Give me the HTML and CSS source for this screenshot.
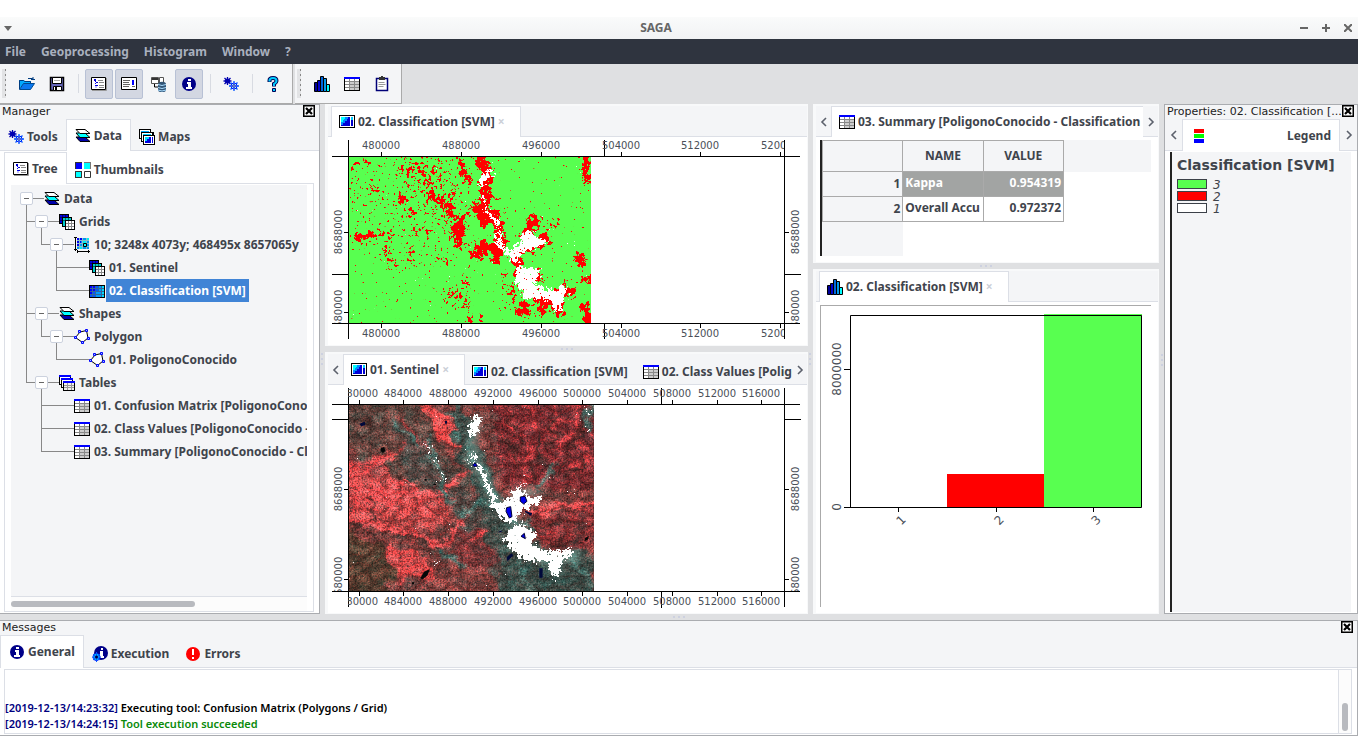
FILE: index.html
```html
<!DOCTYPE html>
<html lang="en">
<head>
<meta charset="utf-8">
<title>SAGA</title>
<link rel="stylesheet" href="styles.css">
</head>
<body>
<svg class="defs" aria-hidden="true">
  <defs>
    <symbol id="i-map" viewBox="0 0 16 16"><rect y="1" width="16" height="13" fill="#000"/><rect x="1" y="2" width="14" height="11" fill="#fff"/><rect x="2" y="3" width="9" height="9" fill="#0000d8"/><path d="M2 3h7v2h-1v2H6v2H4v2H2z" fill="#08f"/><path d="M2 3h4v2H5v1H4v2H2z" fill="#0ff"/><rect x="12" y="3" width="2" height="5" fill="#0cf"/><rect x="12" y="6" width="2" height="6" fill="#00c"/></symbol>
    <symbol id="i-maps" viewBox="0 0 16 16"><path d="M0 0h12v10H0z" fill="#000"/><path d="M1 1h10v8H1z" fill="#fff"/><path d="M2 2h8v6H2z" fill="#0af"/><path d="M2 3h13v10H2z" fill="#000"/><path d="M3 4h10v8H3z" fill="#fff"/><path d="M4 5h8v6H4z" fill="#0cf"/><path d="M4 6h12v10H4z" fill="#000"/><path d="M5 7h10v8H5z" fill="#fff"/><path d="M6 8h6v6H6z" fill="#00d"/><path d="M6 8h4v2H8v2H6z" fill="#0df"/><path d="M13 8h1v6h-1z" fill="#00d"/></symbol>
    <symbol id="i-table" viewBox="0 0 16 16"><rect y="1" width="16" height="14" fill="#000"/><rect x="1" y="3" width="14" height="11" fill="#fff"/><rect x="6" y="6" width="9" height="8" fill="#ccc"/><rect y="1" width="16" height="2" fill="#00f"/><path d="M1 5.500h14M1 8.500h14M1 11.500h14M5.500 3v11M10.500 3v11" stroke="#888" fill="none"/></symbol>
    <symbol id="i-tables" viewBox="0 0 16 16"><path d="M0 0h12v10H0z" fill="#000"/><path d="M1 2h10v7H1z" fill="#fff"/><path d="M0 0h12v2H0z" fill="#00f"/><path d="M2 3h12v10H2z" fill="#000"/><path d="M3 5h10v7H3z" fill="#fff"/><path d="M2 3h12v2H2z" fill="#00f"/><path d="M4 6h12v10H4z" fill="#000"/><path d="M5 8h10v7H5z" fill="#eee"/><path d="M4 6h12v2H4z" fill="#00f"/><path d="M5 10.500h10M5 12.500h10M8.500 8v7M12.500 8v7" stroke="#999"/></symbol>
    <symbol id="i-layers" viewBox="0 0 16 16"><path d="M1 9h9l5 4.500H5z" fill="#00a" stroke="#000"/><path d="M1 5h9l5 4.500H5z" fill="#0ff" stroke="#000"/><path d="M1 1.500h9l5 4H5z" fill="#fff" stroke="#000"/></symbol>
    <symbol id="i-grids" viewBox="0 0 16 16"><path d="M0 0h10v10H0z" fill="#000"/><path d="M1 1h8v8H1z" fill="#00d"/><path d="M3.500 1v8M6.500 1v8M1 3.500h8M1 6.500h8" stroke="#007"/><path d="M3 3h10v10H3z" fill="#000"/><path d="M4 4h8v8H4z" fill="#0cc"/><path d="M6.500 4v8M9.500 4v8M4 6.500h8" stroke="#066"/><path d="M6 6h10v10H6z" fill="#000"/><path d="M7 7h8v8H7z" fill="#fff"/><path d="M9.500 7v8M12.500 7v8M7 9.500h8M7 12.500h8" stroke="#888"/></symbol>
    <symbol id="i-grid" viewBox="0 0 16 16"><path d="M0 2h16v13H0z" fill="#000"/><path d="M1 3h14v11H1z" fill="#369"/><path d="M1 3h2v2H1zM4 3h2v2H4zM1 6h2v2H1zM4 6h2v2H4zM1 9h2v2H1z" fill="#00f"/><path d="M7 3h2v2H7zM4 9h2v2H4zM1 12h2v2H1zM4 12h2v2H4zM7 6h2v2H7z" fill="#05f"/><path d="M10 3h2v2h-2zM10 6h2v2h-2zM7 9h5v2H7zM7 12h5v2H7z" fill="#09f"/><path d="M13 3h2v2h-2zM13 6h2v2h-2zM13 9h2v2h-2zM13 12h2v2h-2z" fill="#0df"/></symbol>
    <symbol id="i-system" viewBox="0 0 16 16"><path d="M3 1h12v11H3z" fill="#09e"/><path d="M3 1h6v2H7v3H5v3H3z" fill="#00e"/><path d="M9 4h3v3H9zM12 1h3v3h-3zM5 9h3v3H5z" fill="#0ee"/><path d="M5.500 1v11M8.500 1v11M12.500 1v11M3 3.500h12M3 6.500h12M3 9.500h12" stroke="#8bc"/><path d="M9.500 6.500h3v3h-3z" fill="#0ff" stroke="#000"/><path d="M1.500 0v14M0 .5h3M0 12.500h3M3 14.500h13M3.500 13v3M14.500 13v3" stroke="#000"/></symbol>
    <symbol id="i-poly" viewBox="0 0 16 16"><path d="M1.500 8.500L6 3l6.500-1.500 1.500 7.500-5.500 4.500z" fill="#fff" stroke="#000"/><path d="M.5 7.500h2v2h-2zM4.500 1.500h2v2h-2zM11.500.5h2v2h-2zM13.500 8.500h2v2h-2zM7.500 12.500h2v2h-2z" fill="#9cf" stroke="#00f"/></symbol>
    <symbol id="i-gear" viewBox="0 0 16 16"><g fill="none"><circle cx="4.500" cy="5" r="2.500" fill="#0000b0"/><path d="M4.500 1v8M.5 5h8M1.500 2l6 6M7.500 2l-6 6" stroke="#0000b0" stroke-width="1.300"/><circle cx="11" cy="10" r="3" fill="#9ff" stroke="#00f"/><path d="M11 5v2M11 13v2M6 10h2M14 10h2M7.500 6.500l1.500 1.500M13 12l1.500 1.500M14.500 6.500l-1.500 1.500M9 12l-1.500 1.500" stroke="#05f" stroke-width="1.300"/><circle cx="11" cy="10" r="1.300" fill="#fff" stroke="#00a"/></g></symbol>
    <symbol id="i-tree" viewBox="0 0 16 16"><path d="M.5 1.500h14v12H.5z" fill="#fff" stroke="#000"/><path d="M1 14.500h14.500V2" fill="none" stroke="#999"/><path d="M3 3h2v2H3zM5 6h2v1H5zM5 9h2v1H5z" fill="#00c"/><path d="M4.500 5v6H6" stroke="#00f" fill="none" stroke-dasharray="1 1"/><path d="M7 4.500h5M8 6.500h5M8 9.500h5M8 11.500h5" stroke="#888"/></symbol>
    <symbol id="i-props" viewBox="0 0 16 16"><path d="M.5 1.500h15v12H.5z" fill="#fff" stroke="#000"/><path d="M2 4.500h7M2 6.500h6M2 8.500h7M2 10.500h6M11 10.500h3" stroke="#666"/><path d="M11 4h2v5h-2z" fill="#00f"/></symbol>
    <symbol id="i-thumb" viewBox="0 0 16 16"><path d="M0 0h7v7H0z" fill="#333"/><path d="M1 1h6v6H1z" fill="#00f"/><path d="M9 0h7v7H9z" fill="#777"/><path d="M9 1h6v6H9z" fill="#0ff"/><path d="M0 9h7v7H0z" fill="#333"/><path d="M1 10h5v5H1z" fill="#0ff"/><path d="M9.500 9.500h6v6h-6z" fill="#fff" stroke="#333"/></symbol>
    <symbol id="i-info" viewBox="0 0 16 16"><circle cx="8" cy="8" r="7" fill="#000088"/><path d="M7 3h3v2H7zM6 6h4v5h1v2H5v-2h2V8H6z" fill="#fff"/></symbol>
    <symbol id="i-exec" viewBox="0 0 16 16"><circle cx="9" cy="7" r="7" fill="#000088"/><path d="M9 2h2v2H9zM8 5h3v5h1v2H8V9z" fill="#fff"/><circle cx="4.500" cy="11" r="3.500" fill="#0cf" stroke="#00f" stroke-dasharray="2 1"/><path d="M4.500 6v10M0 11h9M1 8l7 6M8 8l-7 6" stroke="#05f"/><circle cx="4.500" cy="11" r="1.500" fill="#004"/></symbol>
    <symbol id="i-error" viewBox="0 0 16 16"><circle cx="8" cy="8" r="7" fill="#f00"/><path d="M7 3h2v6H7zM7 11h2v2H7z" fill="#fff"/></symbol>
    <symbol id="i-open" viewBox="0 0 16 16"><path d="M0 13V4h5l1 1h6v3H5z" fill="#0af"/><path d="M.5 13.500l4-6h11l-4 6z" fill="#0a78f0" stroke="#004a90"/><path d="M.5 13V4.500h4l1 1h6V7M9 2.500h4.500V4M12 3.500h4M14 1v3" fill="none" stroke="#003c80"/></symbol>
    <symbol id="i-save" viewBox="0 0 16 16"><path d="M1.500 1.500h13v13h-13z" fill="#66b" stroke="#000" stroke-width="1.500"/><path d="M3.500 1.500h9v6h-9zM4.500 10.500h8v4h-8z" fill="#fff" stroke="#000"/><path d="M6 11h2v3H6z" fill="#000"/><path d="M5 4.500h6" stroke="#aaa"/></symbol>
    <symbol id="i-data" viewBox="0 0 16 16"><path d="M.5 1.500h7v6h-7zM8.500 1.500h4v6h-4z" fill="#fff" stroke="#555"/><path d="M1 2h6v2H1zM9 6h4v2H9z" fill="#333"/><path d="M3.500 8v3H7" fill="none" stroke="#000"/><path d="M7 8c0-3 8-3 8 0v6c0 3-8 3-8 0z" fill="#357"/><path d="M7 8.500q4 2 8 0M7 11.500q4 2 8 0M7 14q4 2 8 0" fill="none" stroke="#adf"/></symbol>
    <symbol id="i-help" viewBox="0 0 16 16"><path d="M4.500 6V4.500Q4.500 2 8 2t3.500 3Q11.500 6.500 9 8v2.500" fill="none" stroke="#005" stroke-width="4"/><path d="M4.500 5.500V4.500Q4.500 2 8 2t3.500 3Q11.500 6.500 9 8v2" fill="none" stroke="#0cf" stroke-width="2"/><path d="M7.500 12.500h3v3h-3z" fill="#0cf" stroke="#005"/></symbol>
    <symbol id="i-histo" viewBox="0 0 16 16"><path d="M.5 6.500h3v9h-3z" fill="#009" stroke="#000"/><path d="M3.500 4.500h3v11h-3z" fill="#00c" stroke="#000"/><path d="M6.500.5h3v15h-3z" fill="#06d" stroke="#000"/><path d="M9.500 2.500h3v13h-3z" fill="#09e" stroke="#000"/><path d="M12.500 8.500h3v7h-3z" fill="#0ff" stroke="#000"/></symbol>
    <symbol id="i-clip" viewBox="0 0 16 16"><path d="M2.500 2.500h11v12h-11z" fill="#fff" stroke="#007" stroke-width="1.500"/><path d="M5 1h6v3H5zM7 0h2v2H7z" fill="#333"/><path d="M4.500 6.500h6M4.500 8.500h7M4.500 10.500h5" stroke="#999"/></symbol>
    <symbol id="i-legend" viewBox="0 0 16 16"><path d="M3 1h10v4H3z" fill="#f00"/><path d="M3 6h10v4H3z" fill="#0f0"/><path d="M3 11h10v4H3z" fill="#00f"/></symbol>
    <symbol id="i-close" viewBox="0 0 12 12"><rect x=".75" y=".75" width="10.500" height="10.500" fill="#fff" stroke="#000" stroke-width="1.500"/><path d="M3 3l6 6M9 3L3 9" stroke="#000" stroke-width="2.200"/></symbol>
    <symbol id="i-prev" viewBox="0 0 8 12"><path d="M6 2L2 6l4 4" fill="none" stroke="#5c616c" stroke-width="1.600"/></symbol>
    <symbol id="i-next" viewBox="0 0 8 12"><path d="M2 2l4 4-4 4" fill="none" stroke="#5c616c" stroke-width="1.600"/></symbol>

    <!-- Turns painted density into solid pixels of one colour with grainy edges -->
    <filter id="f-red" x="0" y="0" width="780" height="540" filterUnits="userSpaceOnUse" color-interpolation-filters="sRGB">
      <feGaussianBlur in="SourceGraphic" stdDeviation="4" result="s"/>
      <feTurbulence type="fractalNoise" baseFrequency=".05" numOctaves="4" seed="5" result="w"/>
      <feDisplacementMap in="s" in2="w" scale="40" xChannelSelector="R" yChannelSelector="G" result="d"/>
      <feTurbulence type="fractalNoise" baseFrequency=".12" numOctaves="3" seed="8" result="n"/>
      <feComposite in="d" in2="n" operator="arithmetic" k2=".6" k3="1" k4="0"/>
      <feColorMatrix values="0 0 0 0 1  0 0 0 0 0  0 0 0 0 0  0 0 0 40 -31"/>
    </filter>
    <filter id="f-white" x="0" y="0" width="780" height="600" filterUnits="userSpaceOnUse" color-interpolation-filters="sRGB">
      <feGaussianBlur in="SourceGraphic" stdDeviation="5" result="s"/>
      <feTurbulence type="fractalNoise" baseFrequency=".07" numOctaves="4" seed="2" result="w"/>
      <feDisplacementMap in="s" in2="w" scale="34" xChannelSelector="R" yChannelSelector="G" result="d"/>
      <feTurbulence type="fractalNoise" baseFrequency=".16" numOctaves="3" seed="11" result="n"/>
      <feComposite in="d" in2="n" operator="arithmetic" k2=".6" k3="1" k4="0"/>
      <feColorMatrix values="0 0 0 0 1  0 0 0 0 1  0 0 0 0 1  0 0 0 30 -25"/>
    </filter>
    <filter id="f-land" x="-80" y="-80" width="940" height="760" filterUnits="userSpaceOnUse" color-interpolation-filters="sRGB">
      <feTurbulence type="fractalNoise" baseFrequency=".02" numOctaves="5" seed="3" result="w"/>
      <feGaussianBlur in="SourceGraphic" stdDeviation="4" result="b"/>
      <feDisplacementMap in="b" in2="w" scale="70" xChannelSelector="R" yChannelSelector="G" result="d"/>
      <feTurbulence type="turbulence" baseFrequency=".022 .03" numOctaves="5" seed="9"/>
      <feColorMatrix values=".8 0 0 0 .48  .6 .4 0 0 .42  .6 .4 0 0 .42  0 0 0 0 1" result="g"/>
      <feComposite in="d" in2="g" operator="arithmetic" k1="1.500" k2="0" k3="0" k4="-.03" result="m"/>
      <feTurbulence type="fractalNoise" baseFrequency=".2" numOctaves="2" seed="14"/>
      <feColorMatrix values="1 0 0 0 0  .6 .4 0 0 0  .6 .4 0 0 0  0 0 0 0 1" result="f"/>
      <feComposite in="m" in2="f" operator="arithmetic" k1="1.500" k2=".2" k3="0" k4="0"/>
      <feColorMatrix values="1 0 0 0 0  0 1 0 0 0  0 0 1 0 0  0 0 0 0 1"/>
    </filter>
    <filter id="f-halo" x="0" y="0" width="780" height="600" filterUnits="userSpaceOnUse"><feGaussianBlur stdDeviation="9"/></filter>
  </defs>
</svg>

<div class="window">
  <header class="titlebar">
    <button class="tb-menu" aria-label="Window menu"><svg width="8" height="5"><path d="M0 0h8L4 5z" fill="#666"/></svg></button>
    <h1>SAGA</h1>
    <div class="win-controls">
      <button aria-label="Minimize"><svg width="8" height="8"><path d="M0 4h8" stroke="#666" stroke-width="2"/></svg></button>
      <button aria-label="Maximize"><svg width="8" height="8"><path d="M0 4h8M4 0v8" stroke="#666" stroke-width="2"/></svg></button>
      <button aria-label="Close"><svg width="8" height="8"><path d="M0 0l8 8M8 0L0 8" stroke="#666" stroke-width="2"/></svg></button>
    </div>
  </header>
  <nav class="menubar">
    <button>File</button><button>Geoprocessing</button><button>Histogram</button><button>Window</button><button>?</button>
  </nav>
  <div class="toolbars">
    <div class="toolbar" role="toolbar">
      <span class="grip"></span>
      <button aria-label="Open"><svg class="icon"><use href="#i-open"/></svg></button>
      <button aria-label="Save"><svg class="icon"><use href="#i-save"/></svg></button>
      <span class="sep"></span>
      <button class="on" aria-label="Manager"><svg class="icon"><use href="#i-tree"/></svg></button>
      <button class="on" aria-label="Properties"><svg class="icon"><use href="#i-props"/></svg></button>
      <button aria-label="Data source"><svg class="icon"><use href="#i-data"/></svg></button>
      <button class="on" aria-label="Messages"><svg class="icon"><use href="#i-info"/></svg></button>
      <span class="sep"></span>
      <button aria-label="Run tool"><svg class="icon"><use href="#i-gear"/></svg></button>
      <span class="sep"></span>
      <button aria-label="Help"><svg class="icon"><use href="#i-help"/></svg></button>
    </div>
    <div class="toolbar" role="toolbar">
      <span class="grip"></span>
      <button aria-label="Histogram"><svg class="icon"><use href="#i-histo"/></svg></button>
      <button aria-label="Table"><svg class="icon"><use href="#i-table"/></svg></button>
      <button aria-label="Clipboard"><svg class="icon"><use href="#i-clip"/></svg></button>
    </div>
  </div>

  <main class="workspace">
    <aside class="dock">
      <div class="dock-head"><h2>Manager</h2><button aria-label="Close manager"><svg class="x"><use href="#i-close"/></svg></button></div>
      <div class="tabs">
        <button class="tab"><svg class="icon"><use href="#i-gear"/></svg>Tools</button>
        <button class="tab active"><svg class="icon"><use href="#i-layers"/></svg>Data</button>
        <button class="tab"><svg class="icon"><use href="#i-maps"/></svg>Maps</button>
      </div>
      <div class="sub">
        <div class="tabs plain">
          <button class="tab active"><svg class="icon"><use href="#i-tree"/></svg>Tree</button>
          <button class="tab"><svg class="icon"><use href="#i-thumb"/></svg>Thumbnails</button>
        </div>
        <div class="tree-box">
          <div class="tree" role="tree">
            <div class="row" role="treeitem"><button class="cell open root" aria-label="Collapse"></button><i class="arm"></i><svg class="icon"><use href="#i-layers"/></svg><span>Data</span></div>
            <div class="row" role="treeitem"><i class="cell tee"></i><button class="cell open" aria-label="Collapse"></button><i class="arm"></i><svg class="icon"><use href="#i-grids"/></svg><span>Grids</span></div>
            <div class="row" role="treeitem"><i class="cell pass"></i><i class="cell end"></i><button class="cell open" aria-label="Collapse"></button><i class="arm"></i><svg class="icon"><use href="#i-system"/></svg><span>10; 3248x 4073y; 468495x 8657065y</span></div>
            <div class="row" role="treeitem"><i class="cell pass"></i><i class="cell"></i><i class="cell tee"></i><i class="cell leaf"></i><i class="arm"></i><svg class="icon"><use href="#i-grids"/></svg><span>01. Sentinel</span></div>
            <div class="row selected" role="treeitem" aria-selected="true"><i class="cell pass"></i><i class="cell"></i><i class="cell end"></i><i class="cell leaf"></i><i class="arm"></i><svg class="icon"><use href="#i-grid"/></svg><span>02. Classification [SVM]</span></div>
            <div class="row" role="treeitem"><i class="cell tee"></i><button class="cell open" aria-label="Collapse"></button><i class="arm"></i><svg class="icon"><use href="#i-layers"/></svg><span>Shapes</span></div>
            <div class="row" role="treeitem"><i class="cell pass"></i><i class="cell end"></i><button class="cell open" aria-label="Collapse"></button><i class="arm"></i><svg class="icon"><use href="#i-poly"/></svg><span>Polygon</span></div>
            <div class="row" role="treeitem"><i class="cell pass"></i><i class="cell"></i><i class="cell end"></i><i class="cell leaf"></i><i class="arm"></i><svg class="icon"><use href="#i-poly"/></svg><span>01. PoligonoConocido</span></div>
            <div class="row" role="treeitem"><i class="cell end"></i><button class="cell open" aria-label="Collapse"></button><i class="arm"></i><svg class="icon"><use href="#i-tables"/></svg><span>Tables</span></div>
            <div class="row" role="treeitem"><i class="cell"></i><i class="cell tee"></i><i class="cell leaf"></i><i class="arm"></i><svg class="icon"><use href="#i-table"/></svg><span>01. Confusion Matrix [PoligonoConocido</span></div>
            <div class="row" role="treeitem"><i class="cell"></i><i class="cell tee"></i><i class="cell leaf"></i><i class="arm"></i><svg class="icon"><use href="#i-table"/></svg><span>02. Class Values [PoligonoConocido - Cl</span></div>
            <div class="row" role="treeitem"><i class="cell"></i><i class="cell end"></i><i class="cell leaf"></i><i class="arm"></i><svg class="icon"><use href="#i-table"/></svg><span>03. Summary [PoligonoConocido - Classification</span></div>
          </div>
          <div class="hscroll"><span></span></div>
        </div>
      </div>
    </aside>

    <div class="column maps">
      <section class="pane">
        <div class="tabs inset"><button class="tab active"><svg class="icon"><use href="#i-map"/></svg>02. Classification [SVM]<span class="close">×</span></button></div>
        <div class="content">
          <svg class="plot" role="img" aria-label="Classification map">
            <svg x="20" y="20" width="243" height="166">
              <rect width="243" height="166" fill="#58ff50"/>
              <g transform="translate(-8 -6) scale(.3333)">
                <g filter="url(#f-red)" fill="none" stroke="#000" stroke-linejoin="round" stroke-linecap="round">
                  <rect x="0" y="0" width="780" height="540" fill="#000" fill-opacity=".01" stroke="none"/>
                  <path d="M27 0H380L400 200 380 300 300 340 160 370 0 270V0z" fill="#000" fill-opacity=".11" stroke="none"/>
                  <path d="M170 20L300 20 360 190 330 250 270 210 190 100zM310 380h80v90H310z" fill="#000" fill-opacity=".17" stroke="none"/>
                  <path d="M580 190l70 0-30 80-60 0zM470 270l60 80-40 110 60 50 80-20" fill="#000" fill-opacity=".2" stroke="none"/>
                  <g stroke-opacity=".5" stroke-width="12"><path d="M30 50L75 35M170 55l60-5 30 30 20 55 40 30 20 30M280 60l25 20M335 90v60l-15 25 20 25 20 30M50 262l40-5 30-15 50 15M85 115l30-3M215 240l60 0M225 175l-30 30M300 320l30 20M150 330l25 5M375 380l8 30M310 440l40-15 20 20 10 25M140 270l0 60M210 290l0 40M620 240l45-35M450 130l25 10M490 370l10 60M520 395l0 45"/></g>
                  <g stroke-opacity=".85" stroke-width="14"><path d="M350 15l20 40 18 40M270 130l25 15 25 15 10 30M370 190l-10 40 5 50M60 258h40M345 235l20-15M710 315l15 20M425 500v15M380 508h12M540 485l20 0"/></g>
                  <path stroke-width="26" d="M420 14l12 40 15 0-15 55M430 130l5 40-15 30M408 170l30 45 30-30M440 200l30 15 15 60-15 50M585 200l-10 25-20 30M620 262l-30 20-50 20M480 290l-65 0-5 25M525 320l20 60 30 50 60 20 40-30 25 0M545 460l15 25M645 430l10 50"/>
                  <path stroke-width="20" d="M735 15l8 75M740 485l8 38M675 410l20 20M735 460l10 30M360 225l0 55M720 320l8 25M735 385l25 0M610 460v20M185 135v10M600 370l-15 10M350 235v20"/>
                </g>
                <g filter="url(#f-white)" fill="#fff" stroke="#fff" stroke-width="11" stroke-linejoin="round">
                  <path d="M440 55l12 5-20 35-15 10zM430 138l4 12M432 165l10 20 15 12 22 35M478 240l4 45 25 20 30-20 20-40 20-5 5 25 35 5-40 20-30 5-20 35-15-10-10-20-30-20z"/>
                  <path d="M535 345l60 15-5 25-25 10 40 25 50 0 20-8 0 15-15 25-5 25-10-5 0-25-65-10-20 5-30-50z"/>
                </g>
              </g>
            </svg>
            <g class="axes"><path d="M20.500 3v199M456.500 3v199M276.500 3v16M276.500 186v16M4 19.500h468M4 186.500h468M4 137.500h16M457 137.500h16M53.500 15v4M133.500 15v4M213.500 15v4M293.500 15v4M372.500 15v4M452.500 15v4M53.500 187v4M133.500 187v4M213.500 187v4M293.500 187v4M372.500 187v4M452.500 187v4M16 95.500h4M457 95.500h4M16 175.500h4M457 175.500h4"/></g>
            <svg x="21" y="0" width="435" height="20" class="ticks"><g><text x="32" y="12">480000</text><text x="112" y="12">488000</text><text x="192" y="12">496000</text><text x="272" y="12">504000</text><text x="351" y="12">512000</text><text x="431" y="12">520000</text></g></svg>
            <svg x="21" y="188" width="435" height="20" class="ticks"><g><text x="32" y="12">480000</text><text x="112" y="12">488000</text><text x="192" y="12">496000</text><text x="272" y="12">504000</text><text x="351" y="12">512000</text><text x="431" y="12">520000</text></g></svg>
            <svg y="20" width="20" height="166" class="ticks"><text transform="translate(14 75) rotate(-90)">8688000</text><text transform="translate(14 155) rotate(-90)">8680000</text></svg>
            <svg x="457" y="20" width="20" height="166" class="ticks"><text transform="translate(14 75) rotate(-90)">8688000</text><text transform="translate(14 155) rotate(-90)">8680000</text></svg>
          </svg>
        </div>
      </section>
      <section class="pane">
        <div class="tabs scrolled">
          <button class="arrow" aria-label="Previous tabs"><svg><use href="#i-prev"/></svg></button>
          <div class="strip">
            <button class="tab active"><svg class="icon"><use href="#i-map"/></svg>01. Sentinel<span class="close">×</span></button>
            <button class="tab"><svg class="icon"><use href="#i-map"/></svg>02. Classification [SVM]</button>
            <button class="tab"><svg class="icon"><use href="#i-table"/></svg>02. Class Values [PoligonoConocido]</button>
          </div>
          <button class="arrow" aria-label="Next tabs"><svg><use href="#i-next"/></svg></button>
        </div>
        <div class="content">
          <svg class="plot" role="img" aria-label="Sentinel image">
            <svg x="20" y="20" width="246" height="186">
              <g transform="translate(-8 -6) scale(.3333)">
                <g filter="url(#f-land)" fill="none" stroke-linecap="round">
                  <rect x="-80" y="-80" width="940" height="760" fill="#7c4542" stroke="none"/>
                  <path d="M-80-80H230L300 130 380 250 400 320 230 340 100 180-80 130z" fill="#664a44"/>
                  <path d="M160 60l60 20 70 80 80 120 110 60 40 110-60 90-70-100-60-120-130-100z" fill="#584a46"/>
                  <path d="M330-80l50 120 60 160 60 130 60 110 180 10 40 60-60 150H500L430 330 370 210 340 110z" fill="#45504b"/>
                  <path d="M450-80h400v300l-190 60-90-20-40 60-50-110z" fill="#7a3336"/>
                  <path d="M560 350l300-35v110l-220 40-80-60z" fill="#803839"/>
                  <path d="M-80 240l190-70 50 50 60 60 130 10-30 80-90 70-100-60-210 10z" fill="#b04a49"/>
                  <path d="M240 15l80 20 30 110-50-10z" fill="#e8504f"/>
                  <path d="M140 430l120 40 20 60-50 20-90-20z" fill="#e05050"/>
                  <path d="M-80 400l170 20 70 80-40 180H-80z" fill="#5a4236"/>
                  <path d="M350 380l90 20 30 100-70 20-60-40z" fill="#7c3f3f"/>
                  <path d="M20 260L180 300 300 270 370 230M30 240L150 180M10 370L200 400 300 440 350 380 390 340M60 340L200 230 260 350M560 350L660 320 820 322M40 290l90 70M100 260l60 70 60 10" stroke="#ff5658" stroke-width="12"/>
                  <path d="M490 60l80 80-20 130M570 20l40 120 70-80M610 240l80-140 60 60M480 160l80 60M500 30l40 50M640 20l30 110M600 430l120-80M200 60l60 80M100 200l80-60M20 210l80-40M700 200l60-30M590 280l-40 50M700 30l60 90M380 440l60-30" stroke="#cf4547" stroke-width="8"/>
                  <path d="M520 50l20 160M600 80l-20 150M680 180l-30 50M740 60l-60 100M30 390l130 10 140 60M90 300l20 60M160 200l40 40M580 370l160 0M610 460l130-70M470 90l50 70M660 60l-30 90M590 150l30 80M740 180l-70 60M30 110l80 40M60 60l60 30" stroke="#43302d" stroke-width="8"/>
                  <path d="M745 25l5 70M330 40l20 60M265 120l20 80 30 60 20 50M380 150l30 50 30 50 50 90 80 50M370 350l70-40M540 500l20 60M640 200l-40 70M700 480l50 60M300 460l60 30M180 90l60 40" stroke="#527069" stroke-width="16"/>
                </g>
                <path filter="url(#f-halo)" d="M410 60l-10 60 0 60 30 50 25 60 50 50 30-60 60 0M520 350l20 80 60 45 70 0 50-10M650 480l0 50" fill="none" stroke="#7fb0a6" stroke-width="28" stroke-opacity=".55"/>
                <g filter="url(#f-white)" fill="#fff" stroke="#fff" stroke-width="14" stroke-linejoin="round">
                  <path d="M405 55l15 5-18 45-12-3zM403 155v25M405 195l20 20 15 35 15 40 0 25 35 30 20 25M455 315l25 5 30-20 30-28 15 25 45 3-25 15-35 15-20 35-20 0z"/>
                  <path d="M525 385l20-5 15 18 25 5-5 17-20 3 35 35 50 5 50-8-40 20 0 30-5 30-15-25-10-30-65 0-35-25-25-35z"/>
                  <path d="M280 493h12"/><path d="M385 175l10 20M260 125l20 50M270 150l20 40M550 235l0 30M745 90l10 10M670 470l30-5M300 215l15 40M740 30l10 20" stroke-width="18" stroke-opacity=".5"/>
                </g>
                <g fill="#0000e8" stroke="#000030" stroke-width="3"><path d="M541 294l14-2 6 15-10 8-10-8zM500 326l12-3 4 30-8 4-10-20zM543 412l10-9 3 16zM398 198l8-6 6 10h-10z"/></g>
                <path d="M500 475l14-12 6 6-18 18zM598 508h10v28h-10zM555 335l22 8-4 8-18-12zM473 400l12-6v6zM58 74l16-6 2 10-12 4zM315 66h6v8h-6z" fill="#00093a"/>
                <path d="M123 146l10-2 3 12-8 6-6-6zM242 536l10-18 18-8-8 20-16 12zM216 550h6v6h-6zM254 240h6v5h-6zM280 254h8v4h-8zM735 417l12-6-4 12-10 4z" fill="#050808"/>
              </g>
            </svg>
            <g class="axes"><path d="M20.500 3v219M456.500 3v219M333.500 3v16M333.500 207v16M4 19.500h468M4 206.500h468M4 34.500h16M457 34.500h16M31.500 15v4M75.500 15v4M120.500 15v4M165.500 15v4M210.500 15v4M254.500 15v4M299.500 15v4M344.500 15v4M389.500 15v4M433.500 15v4M31.500 207v4M75.500 207v4M120.500 207v4M165.500 207v4M210.500 207v4M254.500 207v4M299.500 207v4M344.500 207v4M389.500 207v4M433.500 207v4M16 104.500h4M457 104.500h4M16 194.500h4M457 194.500h4"/></g>
            <svg x="20" y="0" width="435" height="20" class="ticks"><g><text x="11" y="12">480000</text><text x="55" y="12">484000</text><text x="100" y="12">488000</text><text x="145" y="12">492000</text><text x="190" y="12">496000</text><text x="234" y="12">500000</text><text x="279" y="12">504000</text><text x="324" y="12">508000</text><text x="369" y="12">512000</text><text x="413" y="12">516000</text></g></svg>
            <svg x="20" y="208" width="435" height="20" class="ticks"><g><text x="11" y="12">480000</text><text x="55" y="12">484000</text><text x="100" y="12">488000</text><text x="145" y="12">492000</text><text x="190" y="12">496000</text><text x="234" y="12">500000</text><text x="279" y="12">504000</text><text x="324" y="12">508000</text><text x="369" y="12">512000</text><text x="413" y="12">516000</text></g></svg>
            <svg y="20" width="20" height="186" class="ticks"><text transform="translate(14 84) rotate(-90)">8688000</text><text transform="translate(14 174) rotate(-90)">8680000</text></svg>
            <svg x="457" y="20" width="20" height="186" class="ticks"><text transform="translate(14 84) rotate(-90)">8688000</text><text transform="translate(14 174) rotate(-90)">8680000</text></svg>
          </svg>
        </div>
      </section>
    </div>

    <div class="column stats">
      <section class="pane">
        <div class="tabs scrolled">
          <button class="arrow" aria-label="Previous tabs"><svg><use href="#i-prev"/></svg></button>
          <div class="strip"><button class="tab active"><svg class="icon"><use href="#i-table"/></svg>03. Summary [PoligonoConocido - Classification [SVM]]</button></div>
          <button class="arrow" aria-label="Next tabs"><svg><use href="#i-next"/></svg></button>
        </div>
        <div class="content padded">
          <div class="sheet">
            <table>
              <thead><tr><th></th><th>NAME</th><th>VALUE</th></tr></thead>
              <tbody>
                <tr class="picked"><th>1</th><td>Kappa</td><td class="num">0.954319</td></tr>
                <tr><th>2</th><td>Overall Accu</td><td class="num">0.972372</td></tr>
              </tbody>
            </table>
          </div>
        </div>
      </section>
      <section class="pane">
        <div class="tabs inset"><button class="tab active"><svg class="icon"><use href="#i-histo"/></svg>02. Classification [SVM]<span class="close">×</span></button></div>
        <div class="content padded">
          <div class="chart">
            <svg class="plot" role="img" aria-label="Histogram of classes">
              <path d="M126 168h97v33h-97z" fill="#f00"/><path d="M223 8h98v193h-98z" fill="#58ff50"/>
              <path d="M23 201.500h297.500V9.500H29.500V202M23 63.500h6M77.500 202v4M175.500 202v4M272.500 202v4" fill="none" stroke="#000"/>
              <g class="values"><text transform="translate(20 63) rotate(-90)">8000000</text><text transform="translate(20 201) rotate(-90)">0</text>
              <text transform="translate(83 217) rotate(-45)">1</text><text transform="translate(181 217) rotate(-45)">2</text><text transform="translate(278 217) rotate(-45)">3</text></g>
            </svg>
          </div>
        </div>
      </section>
    </div>

    <aside class="dock props">
      <div class="dock-head"><h2>Properties: 02. Classification [...</h2><button aria-label="Close properties"><svg class="x"><use href="#i-close"/></svg></button></div>
      <div class="tabs scrolled">
        <button class="arrow" aria-label="Previous tabs"><svg><use href="#i-prev"/></svg></button>
        <div class="strip"><button class="tab active wide"><svg class="icon"><use href="#i-legend"/></svg>Legend</button></div>
        <button class="arrow" aria-label="Next tabs"><svg><use href="#i-next"/></svg></button>
      </div>
      <div class="legend">
        <h3>Classification [SVM]</h3>
        <ul><li><i class="green"></i>3</li><li><i class="red"></i>2</li><li><i class="white"></i>1</li></ul>
      </div>
    </aside>
  </main>

  <section class="dock messages">
    <div class="dock-head"><h2>Messages</h2><button aria-label="Close messages"><svg class="x"><use href="#i-close"/></svg></button></div>
    <div class="tabs">
      <button class="tab active"><svg class="icon"><use href="#i-info"/></svg>General</button>
      <button class="tab"><svg class="icon"><use href="#i-exec"/></svg>Execution</button>
      <button class="tab"><svg class="icon"><use href="#i-error"/></svg>Errors</button>
    </div>
    <div class="log-wrap"><div class="log">
      <p><time>[2019-12-13/14:23:32]</time> Executing tool: Confusion Matrix (Polygons / Grid)</p>
      <p class="ok"><time>[2019-12-13/14:24:15]</time> Tool execution succeeded</p>
    </div><div class="vscroll"><span></span></div></div>
  </section>
</div>
</body>
</html>
```
FILE: styles.css
```css
* { box-sizing: border-box; }
body {
  margin: 0;
  height: 100vh;
  background: #fff;
  color: #3f444c;
  font: 700 12px/20px "Noto Sans", sans-serif;
  overflow: hidden;
}
button { font: inherit; color: inherit; background: none; border: 0; padding: 0; margin: 0; }
h1, h2, h3, p, ul { margin: 0; padding: 0; font: inherit; }
.defs { position: absolute; width: 0; height: 0; }
.icon { width: 16px; height: 16px; flex: none; }

.window {
  display: flex;
  flex-direction: column;
  height: 100vh;
  padding: 17px 2px 2px 0;
}
.titlebar {
  display: flex;
  align-items: center;
  flex: none;
  height: 22px;
  padding: 0 6px 0 4px;
  background: linear-gradient(#fafbfb, #f1f2f4);
  color: #666;
}
.titlebar button { display: flex; }
.tb-menu { width: 8px; }
.titlebar h1 { flex: 1; text-align: center; font-size: 12px; }
.win-controls { display: flex; gap: 14px; }

.menubar {
  display: flex;
  flex: none;
  gap: 15px;
  height: 25px;
  padding: 0 5px;
  background: #2f343f;
  color: #a9b0be;
}
.toolbars { display: flex; flex: none; gap: 2px; height: 40px; background: #dfe0e2; }
.toolbar {
  display: flex;
  align-items: center;
  gap: 2px;
  padding: 0 5px 0 0;
  background: #f4f5f7;
  border-right: 1px solid #aaa;
  border-bottom: 1px solid #aaa;
}
.toolbar button {
  display: flex;
  align-items: center;
  justify-content: center;
  width: 28px;
  height: 30px;
  border-radius: 2px;
}
.toolbar .on { background: #d3d7e2; border: 1px solid #b8c1d5; }
.grip {
  align-self: stretch;
  width: 8px;
  margin-right: 3px;
  padding: 5px 2px;
  background: linear-gradient(#888, #888 2px, transparent 2px) 3px 0 / 2px 5px repeat-y content-box #e2e3e5;
}
.sep { width: 10px; height: 19px; background: linear-gradient(#d8dbe2, #d8dbe2) 5px 0 / 1px 100% no-repeat; }

.workspace {
  position: relative;
  display: grid;
  flex: 1;
  min-height: 0;
  grid-template-columns: 320px minmax(0, 483fr) minmax(0, 346fr) 194px;
  grid-template-rows: minmax(0, 1fr);
  gap: 5px;
  padding-bottom: 6px;
  background: #dfe0e2;
}
.column { position: relative; display: grid; gap: 6px; min-height: 0; }
.maps { grid-template-rows: minmax(0, 242fr) minmax(0, 262fr); }
.stats { grid-template-rows: minmax(0, 159fr) minmax(0, 345fr); }

/* Three-dot handles on the splitters */
.pane:first-child::after, .workspace::after, .column::before, .props::before {
  content: "";
  position: absolute;
}
.pane:first-child::after, .workspace::after {
  left: 50%;
  width: 12px;
  height: 2px;
  transform: translateX(-50%);
  background: linear-gradient(90deg, #cdd1e0 2px, transparent 2px) 0 0 / 5px 2px;
}
.pane:first-child::after { bottom: -4px; }
.workspace::after { bottom: 2px; }
.column::before, .props::before {
  left: -4px;
  top: 249px;
  width: 2px;
  height: 12px;
  background: linear-gradient(#cdd1e0 2px, transparent 2px) 0 0 / 2px 5px;
}

.dock {
  position: relative;
  display: flex;
  flex-direction: column;
  min-width: 0;
  min-height: 0;
  background: #fff;
  border: solid #aaacb0;
  border-width: 1px 1px 1px 0;
}
.dock-head {
  display: flex;
  flex: none;
  justify-content: space-between;
  height: 14px;
  padding: 0 4px 0 2px;
  background: #f4f5f7;
  color: #222;
  font: 400 11px/13px "DejaVu Sans", sans-serif;
}
.dock-head h2 { white-space: nowrap; }
.dock-head button { display: flex; }
.x { width: 12px; height: 12px; }

.tabs {
  display: flex;
  flex: none;
  align-items: stretch;
  height: 32px;
  background: #f4f5f7;
  box-shadow: inset 0 -1px #dcdfe6;
}
.tabs.plain { background: #fff; }
.tab {
  display: flex;
  align-items: center;
  flex: none;
  gap: 3px;
  padding: 4px 8px 0;
  white-space: nowrap;
}
.tab.active { background: #fff; border: solid #dcdfe6; border-width: 1px 1px 0; padding-top: 0; }
.close { color: #ccd0d8; font-size: 12px; }
.arrow { display: flex; align-items: center; justify-content: center; flex: none; width: 17px; }
.arrow svg { width: 8px; height: 12px; }
.strip { display: flex; flex: 1; min-width: 0; overflow: hidden; }
.tab.wide { flex: 1; justify-content: space-between; }

.sub { display: flex; flex: 1; flex-direction: column; min-height: 0; padding: 1px 5px 1px 4px; }
.tree-box {
  display: flex;
  flex: 1;
  flex-direction: column;
  min-height: 0;
  padding: 1px 6px 0;
  border: 1px solid #dcdfe6;
  border-top: 0;
}
.tree { flex: 1; padding: 2px 0 0 8px; background: #f4f5f7; overflow: hidden; }
.row { display: flex; align-items: center; height: 23px; white-space: nowrap; }
.row span { margin-left: 1px; padding: 0 3px; line-height: 23px; }
.row.selected span { background: #4084d6; color: #fff; }
.cell { position: relative; flex: none; width: 15px; height: 23px; background-repeat: no-repeat; }
.pass { background-image: linear-gradient(#888, #888); background-size: 1px 100%; background-position: 7px 0; }
.tee, .end, .open {
  background-image: linear-gradient(#888, #888), linear-gradient(#888, #888);
  background-position: 7px 0, 7px 11px;
}
.tee { background-size: 1px 100%, 8px 1px; }
.end { background-size: 1px 12px, 8px 1px; }
.open { background-position: 7px 11px, 0 11px; background-size: 1px 12px, 15px 1px; }
.open.root { background-position: 7px 11px, 7px 11px; }
.open::before {
  content: "";
  display: block;
  width: 11px;
  height: 11px;
  margin: 0 auto;
  border: 1px solid #ccd2de;
  border-radius: 2px;
  background: linear-gradient(#666, #666) center / 5px 1px no-repeat #fff;
}
.leaf, .arm { background: linear-gradient(#888, #888) 0 11px / 100% 1px no-repeat; }
.arm { flex: none; width: 10px; height: 23px; }
.hscroll { height: 15px; padding: 4px 0; border-top: 1px solid #dcdfe6; background: #fcfcfc; }
.hscroll span { display: block; width: 62%; height: 6px; border-radius: 3px; background: #b8babf; }

.pane {
  position: relative;
  display: flex;
  flex-direction: column;
  min-width: 0;
  min-height: 0;
  padding: 2px 1px 1px 3px;
  background: #f8f9fa;
}
.pane .tabs { height: 31px; }
.pane .inset { padding-left: 3px; }
.pane .tab { padding-left: 7px; }
.pane .tab.active { padding-right: 15px; }
.pane .arrow { width: 15px; }
.content { flex: 1; min-height: 0; background: #fff; }
.content.padded { padding: 3px 7px 6px 4px; }
.plot { display: block; width: 100%; height: 100%; }
.axes { fill: none; stroke: #000; shape-rendering: crispEdges; }
.ticks, .values { fill: #4a4f58; font: 400 10px "DejaVu Sans", sans-serif; text-anchor: middle; }
.values { font-size: 12px; }

.sheet {
  height: 100%;
  border-left: 2px solid #222;
  background:
    linear-gradient(#f4f5f7, #f4f5f7) 0 0 / 100% 32px no-repeat,
    linear-gradient(#f4f5f7, #f4f5f7) 0 0 / 81px 100% no-repeat;
}
.sheet table { border-collapse: collapse; table-layout: fixed; width: 242px; }
.sheet th, .sheet td { width: 80px; height: 25px; padding: 0 2px; border: 1px solid #aaa; line-height: 20px; white-space: nowrap; overflow: hidden; }
.sheet td { padding-bottom: 3px; background: #fff; }
.sheet th { font-weight: 700; background: #f4f5f7; }
.sheet thead th { height: 31px; }
.sheet tbody th { text-align: right; }
.sheet .num { text-align: right; }
.sheet .picked td { background: #a2a4a3; color: #fff; }
.chart { height: 100%; border: solid #aaa; border-width: 1px 0 0 1px; }

.props { border-left-width: 1px; }
.legend {
  flex: 1;
  margin: 1px 6px 1px 5px;
  padding: 3px 5px;
  border-left: 2px solid #222;
  background: #f4f5f7;
}
.legend h3 { font: 700 14px/20px "DejaVu Sans", sans-serif; white-space: nowrap; }
.legend ul { margin-top: 3px; list-style: none; }
.legend li { display: flex; gap: 6px; height: 12px; font: italic 400 12px/14px "DejaVu Sans", sans-serif; }
.legend i { width: 30px; height: 10px; margin-top: 1px; border: 1px solid #3b4048; }
.green { background: #58ff50; }
.red { background: #f00; }
.white { background: #fff; }

.messages { flex: none; height: 116px; }
.messages .tabs { height: 33px; }
.log-wrap { display: flex; flex: 1; min-height: 0; margin: 1px 5px 1px 4px; border: 1px solid #dcdfe6; }
.log { display: flex; flex: 1; flex-direction: column; justify-content: flex-end; padding-bottom: 1px; color: #000; font-size: 11px; line-height: 16px; font-weight: 600; }
.log time { color: #000080; }
.log .ok { color: #0a8a0a; }
.vscroll { display: flex; align-items: flex-end; justify-content: center; width: 13px; padding-bottom: 2px; border-left: 1px solid #dcdfe6; background: #fcfcfc; }
.vscroll span { width: 6px; height: 28px; border-radius: 3px; background: #b8babf; }
```
